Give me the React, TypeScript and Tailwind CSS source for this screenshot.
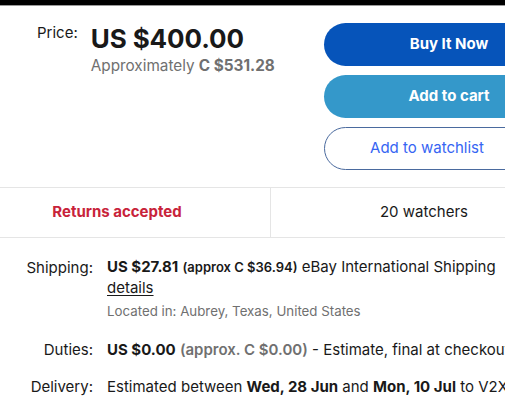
import React from 'react';

const font = { fontFamily: 'Inter, "Liberation Sans", sans-serif' };

function PillButton({ children, className }: { children: React.ReactNode; className: string }) {
    return (
        <button className={`h-[43px] w-[250px] rounded-full flex items-center justify-center text-[15px] ${className}`}>
            {children}
        </button>
    );
}

function InfoRow({ label, children }: { label: string; children: React.ReactNode }) {
    return (
        <div className="flex items-start">
            <div className="w-[93px] shrink-0 text-right text-[15px] text-[#191919]">{label}</div>
            <div className="pl-[14px] text-[15px] text-[#191919] whitespace-nowrap">{children}</div>
        </div>
    );
}

export default function App() {
    return (
        <div className="w-[505px] h-[401px] overflow-hidden bg-white" style={font}>
            <div className="h-[5px] bg-black" />
            <div className="h-px bg-[#9a9a9a]" />

            <div className="w-[577px]">
                {/* price + actions */}
                <div className="flex pt-[17px] pb-[17px]">
                    <div className="flex pl-[37px]">
                        <div className="text-[15px] text-[#191919] leading-[20px]">Price:</div>
                        <div className="pl-[13px] pt-[1px]">
                            <div className="text-[26px] font-bold text-[#191919] leading-[30px] tracking-[-0.1px]">US $400.00</div>
                            <div className="text-[15.3px] text-[#707070] leading-[20px] mt-[2px]">
                                Approximately <span className="font-bold">C $531.28</span>
                            </div>
                        </div>
                    </div>
                    <div className="ml-auto mr-[3px] flex flex-col gap-[9px]">
                        <PillButton className="bg-[#0654ba] text-white font-bold">Buy It Now</PillButton>
                        <PillButton className="bg-[#3498ca] text-white font-bold">Add to cart</PillButton>
                        <PillButton className="border border-[#4a6a9e] text-[#3665f3] pr-[44px]">Add to watchlist</PillButton>
                    </div>
                </div>

                {/* returns / watchers */}
                <div className="flex h-[51px] border-y border-[#e5e5e5]">
                    <div className="w-[271px] flex items-center justify-center pr-[36px] border-r border-[#e5e5e5] text-[15px] font-bold text-[#c8233a]">
                        Returns accepted
                    </div>
                    <div className="flex-1 flex items-center justify-center text-[15px] text-[#191919]">
                        20 watchers
                    </div>
                </div>

                {/* shipping details */}
                <div className="pt-[19px] flex flex-col">
                    <InfoRow label="Shipping:">
                        <div className="leading-[20px]">
                            <span className="font-bold">US $27.81</span>{' '}
                            <span className="text-[13px] font-semibold">(approx C $36.94)</span> eBay International Shipping
                        </div>
                        <div className="leading-[22px] underline underline-offset-2">details</div>
                        <div className="text-[13.3px] text-[#707070] leading-[20px] mt-[2px]">Located in: Aubrey, Texas, United States</div>
                    </InfoRow>
                    <div className="h-[18px]" />
                    <InfoRow label="Duties:">
                        <span className="font-bold">US $0.00</span>{' '}
                        <span className="font-semibold text-[#707070]">(approx. C $0.00)</span> - Estimate, final at checkout
                    </InfoRow>
                    <div className="h-[14px]" />
                    <InfoRow label="Delivery:">
                        Estimated between <span className="font-bold">Wed, 28 Jun</span> and <span className="font-bold">Mon, 10 Jul</span> to V2X 0K3
                    </InfoRow>
                </div>
            </div>
        </div>
    );
}
